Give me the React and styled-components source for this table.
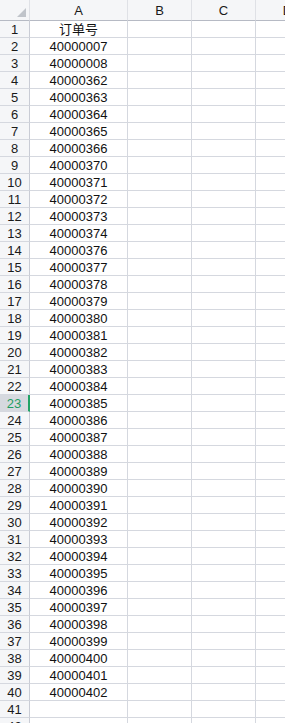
import React from 'react';
import styled, { createGlobalStyle, css } from 'styled-components';

const GlobalStyle = createGlobalStyle`
  html, body {
    margin: 0;
    padding: 0;
    background: #ffffff;
    overflow: hidden;
  }
  body {
    font-family: "Liberation Sans", "Noto Sans CJK SC", Arial, sans-serif;
    font-size: 13px;
    color: #000000;
  }
`;

const COLUMNS = ['A', 'B', 'C', 'D'];
const ORDERS = [
  '40000007', '40000008', '40000362', '40000363', '40000364', '40000365',
  '40000366', '40000370', '40000371', '40000372', '40000373', '40000374',
  '40000376', '40000377', '40000378', '40000379', '40000380', '40000381',
  '40000382', '40000383', '40000384', '40000385', '40000386', '40000387',
  '40000388', '40000389', '40000390', '40000391', '40000392', '40000393',
  '40000394', '40000395', '40000396', '40000397', '40000398', '40000399',
  '40000400', '40000401', '40000402',
];
const ROW_COUNT = 42;
const ACTIVE_ROW = 23;

const Sheet = styled.div`
  display: grid;
  grid-template-columns: 30px 98px 64px 64px 64px;
  grid-template-rows: 21px;
  grid-auto-rows: 17px;
  width: 320px;
`;

const Cell = styled.div`
  box-sizing: border-box;
  border-right: 1px solid #d5d8df;
  border-bottom: 1px solid #d5d8df;
  display: flex;
  align-items: center;
  justify-content: center;
  padding-top: 2px;
  line-height: 16px;
  white-space: nowrap;
  overflow: hidden;
  color: #111111;
`;

const Corner = styled(Cell)`
  background: #f5f6f8;
  border-right-color: #dfe1e6;
  border-bottom-color: #b6bac4;
  justify-content: flex-end;
  align-items: flex-end;
  padding: 0 3px 3px 0;
`;

const ColHeader = styled(Cell)`
  background: #f5f6f8;
  border-right-color: #dfe1e6;
  border-bottom-color: #b6bac4;
  padding-top: 1px;
  color: #1a1a1a;
`;

const RowHeader = styled(Cell)`
  background: #f5f6f8;
  border-right-color: #c9ccd5;
  border-bottom-color: #d5d8df;
  color: #1a1a1a;
  ${(p) =>
    p.$active &&
    css`
      background: #d6d9df;
      color: #1f9d63;
      border-right: 2px solid #21a366;
    `}
`;

function CornerMark() {
  return (
    <svg width="9" height="9" viewBox="0 0 9 9">
      <polygon points="9,0 9,9 0,9" fill="#c0c4ca" />
    </svg>
  );
}

export default function App() {
  const rows = [];
  for (let r = 1; r <= ROW_COUNT; r++) {
    let value = '';
    if (r === 1) value = '订单号';
    else if (r - 2 < ORDERS.length) value = ORDERS[r - 2];
    rows.push(
      <React.Fragment key={r}>
        <RowHeader $active={r === ACTIVE_ROW}>{r}</RowHeader>
        <Cell>{value}</Cell>
        <Cell />
        <Cell />
        <Cell />
      </React.Fragment>
    );
  }

  return (
    <>
      <GlobalStyle />
      <Sheet>
        <Corner>
          <CornerMark />
        </Corner>
        {COLUMNS.map((c) => (
          <ColHeader key={c}>{c}</ColHeader>
        ))}
        {rows}
      </Sheet>
    </>
  );
}
